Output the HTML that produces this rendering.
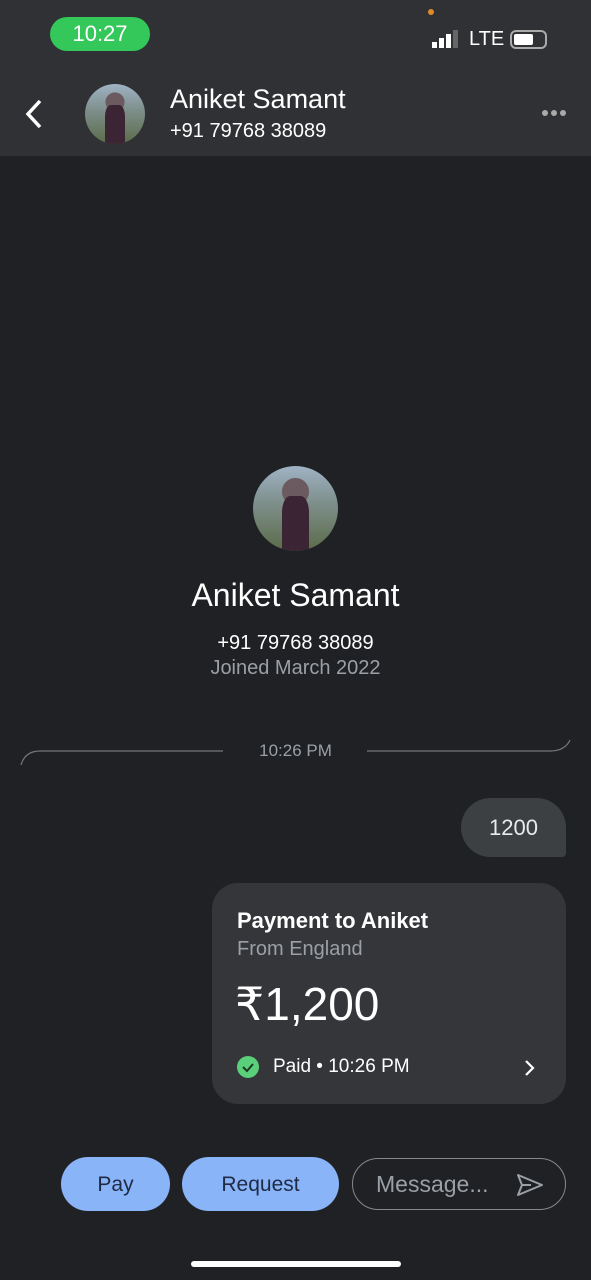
<!DOCTYPE html>
<html><head><meta charset="utf-8"><style>
*{margin:0;padding:0;box-sizing:border-box}
body{width:591px;height:1280px;background:#202124;font-family:"Liberation Sans",sans-serif;color:#e8eaed;position:relative;overflow:hidden}
.a{position:absolute}
.hdr{left:0;top:0;width:591px;height:156px;background:#303134}
.av{border-radius:50%;background:radial-gradient(circle at 50% 30%,#6b5a60 0 18%,transparent 19%),linear-gradient(180deg,#9fb3c4 0%,#7d8e8a 45%,#5b6b48 100%);overflow:hidden}
.av:after{content:"";position:absolute;left:34%;top:35%;width:32%;height:65%;background:#3b2433;border-radius:30% 30% 0 0}
.btn{background:#8ab4f8;color:#1f2a44;border-radius:28px;font-size:21px;text-align:center;line-height:56px;height:54px}
</style></head><body>
<div class="a hdr"></div>
<div class="a" style="left:50px;top:17px;width:100px;height:34px;background:#34c759;border-radius:17px;color:#fff;font-size:22px;text-align:center;line-height:34px">10:27</div>
<div class="a" style="left:428px;top:9px;width:6px;height:6px;background:#e0892a;border-radius:50%"></div>
<div class="a" style="left:432px;top:42px;width:5px;height:6px;background:#fff"></div>
<div class="a" style="left:439px;top:38px;width:5px;height:10px;background:#fff"></div>
<div class="a" style="left:446px;top:34px;width:5px;height:14px;background:#fff"></div>
<div class="a" style="left:453px;top:30px;width:5px;height:18px;background:#666"></div>
<div class="a" style="left:469px;top:28px;font-size:20px;color:#fff">LTE</div>
<div class="a" style="left:510px;top:30px;width:37px;height:19px;border:2px solid #aaa;border-radius:6px"><div style="margin:2px;width:19px;height:11px;background:#fff;border-radius:2px"></div></div>
<svg class="a" style="left:22px;top:98px" width="24" height="32"><path d="M18 3 L6 16 L18 29" stroke="#fff" stroke-width="3.5" fill="none"/></svg>
<div class="a av" style="left:85px;top:84px;width:60px;height:60px"></div>
<div class="a" style="left:170px;top:84px;font-size:27px;color:#fff">Aniket Samant</div>
<div class="a" style="left:170px;top:120px;font-size:20px;color:#fff">+91 79768 38089</div>
<div class="a" style="left:542px;top:110px;font-size:0"><span style="display:inline-block;width:6px;height:6px;border-radius:50%;background:#aaa;margin-right:3px"></span><span style="display:inline-block;width:6px;height:6px;border-radius:50%;background:#aaa;margin-right:3px"></span><span style="display:inline-block;width:6px;height:6px;border-radius:50%;background:#aaa"></span></div>
<div class="a av" style="left:253px;top:466px;width:85px;height:85px"></div>
<div class="a" style="left:0;width:591px;top:577px;text-align:center;font-size:32px;color:#fff">Aniket Samant</div>
<div class="a" style="left:0;width:591px;top:632px;text-align:center;font-size:20px;color:#fff">+91 79768 38089</div>
<div class="a" style="left:0;width:591px;top:657px;text-align:center;font-size:20px;color:#9aa0a6">Joined March 2022</div>
<svg class="a" style="left:0;top:735px" width="591" height="35"><path d="M21 30 Q25 16 40 16 L223 16 M367 16 L550 16 Q565 16 570 5" stroke="#777" stroke-width="1.2" fill="none"/></svg>
<div class="a" style="left:0;width:591px;top:741px;text-align:center;font-size:17px;color:#9aa0a6">10:26 PM</div>
<div class="a" style="left:461px;top:798px;width:105px;height:59px;background:#3c4043;border-radius:30px 30px 4px 30px;font-size:22px;text-align:center;line-height:59px">1200</div>
<div class="a" style="left:212px;top:883px;width:354px;height:221px;background:#35363a;border-radius:26px"></div>
<div class="a" style="left:237px;top:908px;font-size:22px;color:#fff;font-weight:bold">Payment to Aniket</div>
<div class="a" style="left:237px;top:938px;font-size:20px;color:#9aa0a6">From England</div>
<div class="a" style="left:235px;top:977px;font-size:46px;color:#fff">₹1,200</div>
<svg class="a" style="left:237px;top:1056px" width="24" height="24"><circle cx="11" cy="11" r="11" fill="#5bd07a"/><path d="M6 11 L10 15 L16 8" stroke="#1e3a26" stroke-width="2" fill="none"/></svg>
<div class="a" style="left:273px;top:1056px;font-size:19px;color:#fff">Paid • 10:26 PM</div>
<svg class="a" style="left:522px;top:1058px" width="16" height="20"><path d="M4 3 L11 10 L4 17" stroke="#fff" stroke-width="2.2" fill="none"/></svg>
<div class="a btn" style="left:61px;top:1157px;width:109px">Pay</div>
<div class="a btn" style="left:182px;top:1157px;width:157px">Request</div>
<div class="a" style="left:352px;top:1158px;width:214px;height:52px;border:1.5px solid #888;border-radius:26px"></div>
<div class="a" style="left:376px;top:1171px;font-size:23px;color:#9aa0a6">Message...</div>
<svg class="a" style="left:515px;top:1172px" width="30" height="26"><path d="M3 3 L27 13 L3 23 L7 13 Z M7 13 L16 13" stroke="#9aa0a6" stroke-width="2" fill="none" stroke-linejoin="round"/></svg>
<div class="a" style="left:191px;top:1261px;width:210px;height:6px;background:#fff;border-radius:3px"></div>
</body></html>
